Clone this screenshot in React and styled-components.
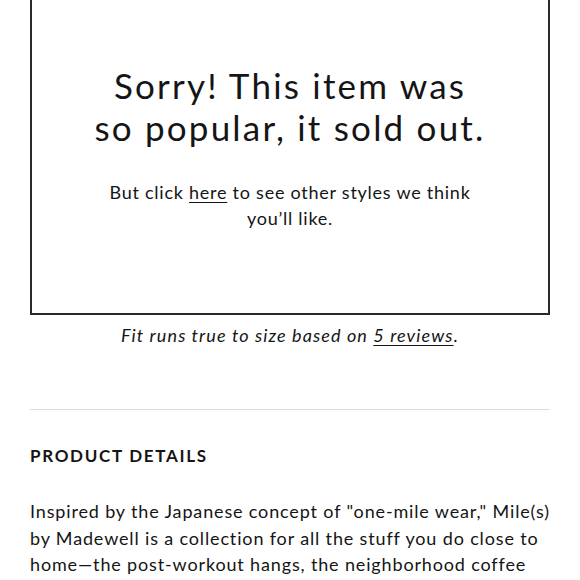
import styled, { createGlobalStyle } from "styled-components";

const GlobalStyle = createGlobalStyle`
  body {
    margin: 0;
    background: #fff;
    color: #151515;
    font-family: Lato, "Open Sans", sans-serif;
  }
`;

const Page = styled.div`
  padding: 0 30px;
`;

const SoldOutBox = styled.div`
  border: 2px solid #2a2a2a;
  border-top: none;
  height: 315px;
  box-sizing: border-box;
  padding-top: 64px;
  text-align: center;
`;

const Heading = styled.h2`
  margin: 0;
  font-size: 35px;
  font-weight: 400;
  line-height: 42px;
  letter-spacing: 2.2px;
`;

const Note = styled.p`
  margin: 31px 0 0;
  font-size: 18px;
  line-height: 26px;
  letter-spacing: 0.75px;
`;

const Link = styled.a`
  color: inherit;
  text-decoration: underline;
  text-underline-offset: 3px;
`;

const FitLine = styled.p`
  margin: 7px 0 0;
  text-align: center;
  font-size: 18px;
  font-style: italic;
  line-height: 26px;
  letter-spacing: 1.1px;
`;

const Divider = styled.hr`
  margin: 61px 0 0;
  border: none;
  border-top: 1px solid #dcdcdc;
`;

const SectionTitle = styled.h3`
  margin: 34px 0 0;
  font-size: 17px;
  font-weight: 700;
  letter-spacing: 1.7px;
  line-height: 24px;
`;

const Body = styled.p`
  margin: 30px 0 0;
  font-size: 18px;
  line-height: 26.5px;
  letter-spacing: 0.85px;
  white-space: nowrap;
`;

export default function App() {
  return (
    <Page>
      <GlobalStyle />
      <SoldOutBox>
        <Heading>
          Sorry! This item was
          <br />
          so popular, it sold out.
        </Heading>
        <Note>
          But click <Link href="#">here</Link> to see other styles we think
          <br />
          you’ll like.
        </Note>
      </SoldOutBox>
      <FitLine>
        Fit runs true to size based on <Link href="#">5 reviews</Link>.
      </FitLine>
      <Divider />
      <SectionTitle>PRODUCT DETAILS</SectionTitle>
      <Body>
        Inspired by the Japanese concept of "one-mile wear," Mile(s)
        <br />
        by Madewell is a collection for all the stuff you do close to
        <br />
        home—the post-workout hangs, the neighborhood coffee
        <br />
        runs, the lazy weekends spent at home.
      </Body>
    </Page>
  );
}
